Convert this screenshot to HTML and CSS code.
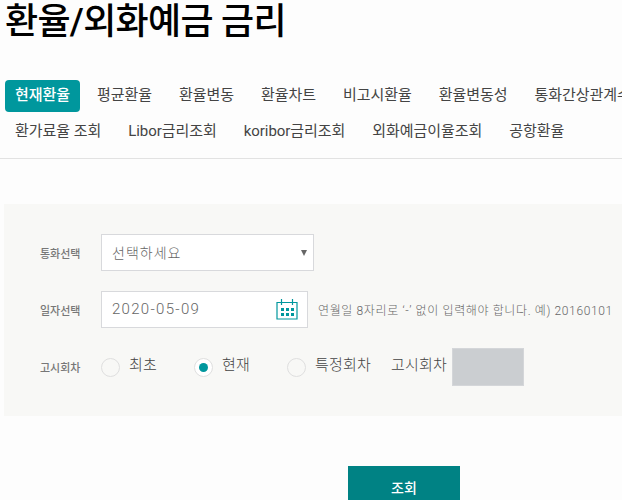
FILE: index.html
```html
<!DOCTYPE html>
<html lang="ko">
<head>
<meta charset="utf-8">
<title>환율/외화예금 금리</title>
<link rel="stylesheet" href="styles.css">
</head>
<body>
<h1 class="title">환율/외화예금 금리</h1>
<nav class="tabs">
  <div class="tab-row">
    <a class="tab active">현재환율</a>
    <a class="tab">평균환율</a>
    <a class="tab">환율변동</a>
    <a class="tab">환율차트</a>
    <a class="tab">비고시환율</a>
    <a class="tab">환율변동성</a>
    <a class="tab">통화간상관계수</a>
  </div>
  <div class="tab-row">
    <a class="tab">환가료율 조회</a>
    <a class="tab">Libor금리조회</a>
    <a class="tab">koribor금리조회</a>
    <a class="tab">외화예금이율조회</a>
    <a class="tab">공항환율</a>
  </div>
</nav>
<form class="panel">
  <div class="field">
    <span class="label">통화선택</span>
    <div class="select"><span class="value">선택하세요</span><i class="caret"></i></div>
  </div>
  <div class="field">
    <span class="label">일자선택</span>
    <div class="date">
      <span class="value">2020-05-09</span>
      <svg class="cal" width="22" height="22" viewBox="0 0 22 22" fill="none">
        <path d="M1 4.5H21V21H1Z" stroke="#00979d" stroke-width="1.2"/>
        <path d="M5.5 1V7M16.5 1V7" stroke="#00979d" stroke-width="1.2"/>
        <path fill="#00979d" stroke="none" d="M5 10h3v3H5zM10 10h3v3h-3zM15 10h3v3h-3zM5 15h3v3H5zM10 15h3v3h-3zM15 15h3v3h-3z"/>
      </svg>
    </div>
    <span class="hint">연월일 8자리로 ‘-’ 없이 입력해야 합니다. 예) 20160101</span>
  </div>
  <div class="field">
    <span class="label">고시회차</span>
    <div class="radios">
      <span class="radio"><i class="dot"></i><span class="rtext">최초</span></span>
      <span class="radio on"><i class="dot"></i><span class="rtext">현재</span></span>
      <span class="radio"><i class="dot"></i><span class="rtext">특정회차</span></span>
      <span class="round rtext">고시회차</span>
      <span class="round-box"></span>
    </div>
  </div>
</form>
<div class="actions"><button class="submit" type="button">조회</button></div>
</body>
</html>
```
FILE: styles.css
```css
* { box-sizing: border-box; }
html, body { margin: 0; height: 500px; overflow: hidden; background: #fdfdfd; }
body { font-family: Roboto, "Noto Sans CJK KR", sans-serif; color: #333; width: 622px; }
.title { margin: 0; padding: 2px 0 0 5px; height: 80px; font-size: 36px; font-weight: 500; line-height: 40px; color: #000; letter-spacing: -0.7px; white-space: nowrap; }
.tabs { padding-left: 5px; height: 79px; border-bottom: 1px solid #e2e2e2; }
.tab-row { display: flex; gap: 7px; height: 36px; white-space: nowrap; overflow: hidden; }
.tab { flex: none; height: 32px; line-height: 30px; padding: 0 10px; font-size: 15px; color: #444; border-radius: 4px; letter-spacing: -0.05px; }
.tab.active { background: #00979d; color: #fff; font-weight: 500; }
.panel { margin: 45px 0 0 4px; height: 212px; padding-top: 30px; background: #f8f8f6; display: flex; flex-direction: column; gap: 20px; }
.field { display: flex; align-items: center; height: 37px; }
.label { width: 97px; padding-left: 36px; font-size: 11px; color: #777; font-weight: 500; flex: none; }
.select, .date { height: 37px; background: #fff; border: 1px solid #d8d9dc; display: flex; align-items: center; justify-content: space-between; padding-left: 10px; font-weight: 300; color: #666; }
.value { position: relative; top: -1px; }
.select { width: 213px; padding-right: 6px; font-size: 14px; letter-spacing: 1px; }
.date { width: 207px; padding-right: 9px; font-size: 15px; letter-spacing: 1.3px; }
.caret { width: 0; height: 0; border-left: 3px solid transparent; border-right: 3px solid transparent; border-top: 6px solid #666; }
.cal { flex: none; position: relative; top: -1px; }
.hint { margin-left: 10px; font-size: 12px; letter-spacing: 0.63px; font-weight: 300; color: #666; white-space: nowrap; }
.radios { display: flex; align-items: center; font-weight: 300; color: #444; height: 38px; }
.rtext { font-size: 15px; position: relative; top: -3px; letter-spacing: 0.2px; }
.radio { display: flex; align-items: center; gap: 9px; width: 93px; flex: none; }
.radio:nth-child(3) { width: 104px; }
.dot { width: 19px; height: 19px; border-radius: 50%; border: 1px solid #dfdfdf; background: #f8f8f6; flex: none; position: relative; top: 1px; }
.on .dot { background: #fff; }
.on .dot::after { content: ""; display: block; width: 9px; height: 9px; margin: 4px; border-radius: 50%; background: #00979d; }
.round { width: 61px; flex: none; }
.round-box { width: 72px; height: 38px; background: #cbced1; border: 1px solid #d4d6d9; }
.actions { margin-top: 50px; padding-left: 348px; }
.submit { width: 112px; height: 50px; border: 0; padding: 0 0 8px; background: #008284; color: #fff; font: 500 14px "Noto Sans CJK KR", sans-serif; }
```
